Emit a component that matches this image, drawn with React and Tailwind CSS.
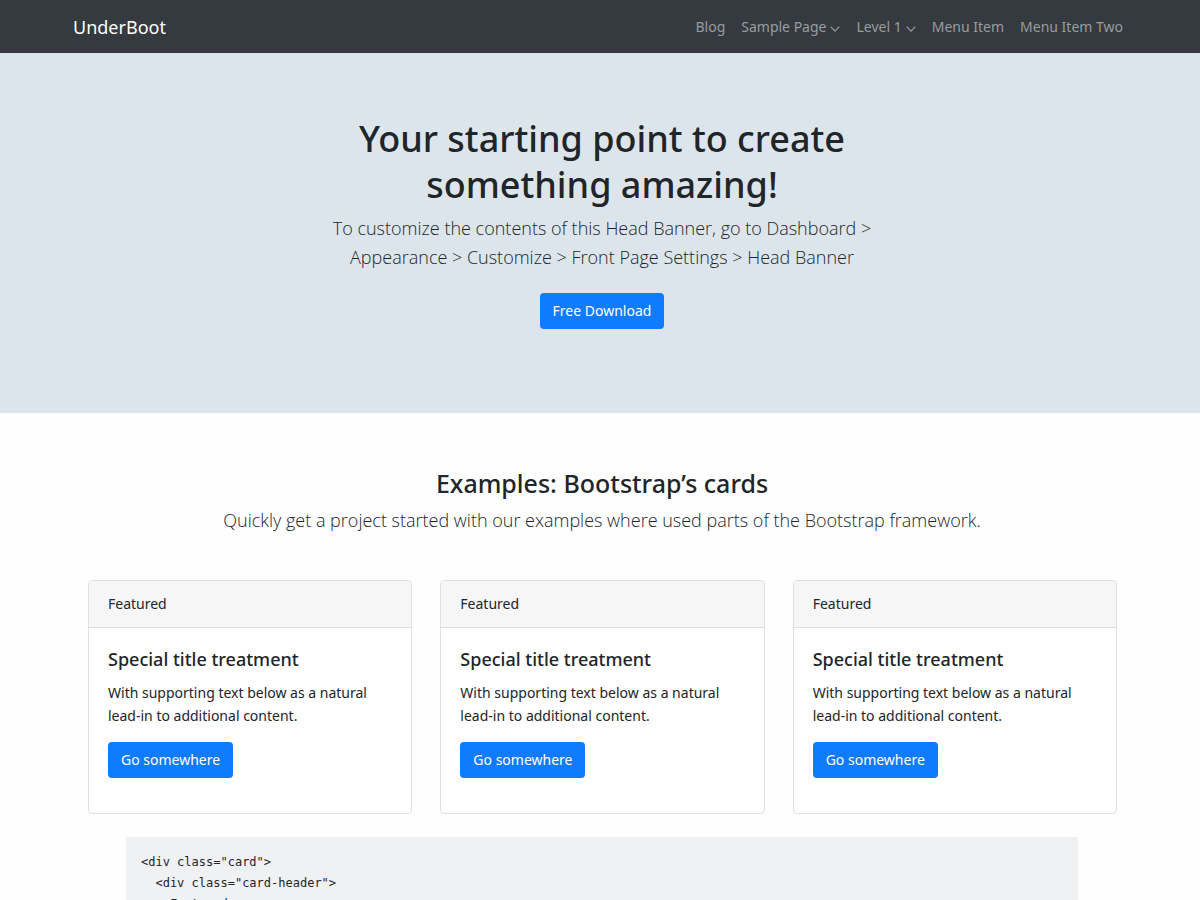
const cards = [1, 2, 3];

const code = `<div class="card">
  <div class="card-header">
    Featured
  </div>
  <div class="card-body">
    <h5 class="card-title">Special title treatment</h5>
    <p class="card-text">With supporting text below as a natural lead-in to additional content.</p>
    <a href="#" class="btn btn-primary">Go somewhere</a>
  </div>
</div>`;

function Chevron() {
  return (
    <svg className="mt-1 ml-1 h-[6px] w-[10px]" viewBox="0 0 10 6" fill="none" stroke="currentColor" strokeWidth="1.2" aria-hidden="true">
      <path d="M0.7 0.6 5 5.1 9.3 0.6" />
    </svg>
  );
}

function NavLink({ children, menu }) {
  return (
    <a href="#" className="flex items-center whitespace-nowrap">
      {children}
      {menu && <Chevron />}
    </a>
  );
}

function Button({ children }) {
  return (
    <a href="#" className="inline-block rounded-[4px] bg-[#0f7bff] px-[13px] py-[7px] text-[14px] leading-[22px] text-white">
      {children}
    </a>
  );
}

function Card() {
  return (
    <article className="rounded-[4px] border border-[#dfdfdf] bg-white">
      <div className="rounded-t-[3px] border-b border-[#dfdfdf] bg-[#f6f6f6] px-[19px] py-3 text-[14px] leading-[22px]">Featured</div>
      <div className="px-[19px] pt-5 pb-[35px]">
        <h3 className="mb-[10px] text-[18px] leading-[23px] font-medium">Special title treatment</h3>
        <p className="mb-[15px] text-[14px] leading-[23px]">
          With supporting text below as a natural lead-in to additional content.
        </p>
        <Button>Go somewhere</Button>
      </div>
    </article>
  );
}

export default function App() {
  return (
    <div className="min-h-screen bg-[#fefefe] font-['Noto_Sans','Open_Sans',sans-serif] text-[14px] text-[#212529]">
      <header className="bg-[#343a40]">
        <div className="mx-auto flex h-[53px] max-w-[1200px] items-center justify-between pr-[77px] pl-[73px]">
          <a href="#" className="text-[18px] leading-7 text-white">UnderBoot</a>
          <nav className="flex gap-4 text-[14px] leading-[22px] text-[#999c9f]">
            <NavLink>Blog</NavLink>
            <NavLink menu>Sample Page</NavLink>
            <NavLink menu>Level 1</NavLink>
            <NavLink>Menu Item</NavLink>
            <NavLink>Menu Item Two</NavLink>
          </nav>
        </div>
      </header>
      <section className="bg-[#dde5ec] pt-[63px] pb-[84px] pl-1 text-center">
        <div className="mx-auto max-w-[560px]">
          <h1 className="mb-[6px] text-[36px] leading-[46px] font-medium">Your starting point to create something amazing!</h1>
          <p className="mb-[21px] font-['Open_Sans',sans-serif] text-[18px] leading-[29px] font-light">
            To customize the contents of this Head Banner, go to Dashboard &gt; Appearance &gt; Customize &gt; Front Page Settings &gt; Head Banner
          </p>
          <Button>Free Download</Button>
        </div>
      </section>
      <main className="mx-auto max-w-[1200px] pt-[53px]">
        <div className="pl-1 text-center">
          <h2 className="mb-[6px] text-[25px] leading-[34px] font-medium">Examples: Bootstrap’s cards</h2>
          <p className="font-['Open_Sans',sans-serif] text-[18px] leading-[29px] font-light">
            Quickly get a project started with our examples where used parts of the Bootstrap framework.
          </p>
        </div>
        <div className="mt-[45px] grid grid-cols-3 gap-7 pr-[83px] pl-[88px]">
          {cards.map((id) => <Card key={id} />)}
        </div>
        <div className="mt-[23px] pr-[122px] pl-[126px]">
          <pre className="overflow-x-auto bg-[#f0f1f3] p-[15px] text-[12px] leading-5"><code className="font-['DejaVu_Sans_Mono',monospace]">{code}</code></pre>
        </div>
      </main>
    </div>
  );
}
